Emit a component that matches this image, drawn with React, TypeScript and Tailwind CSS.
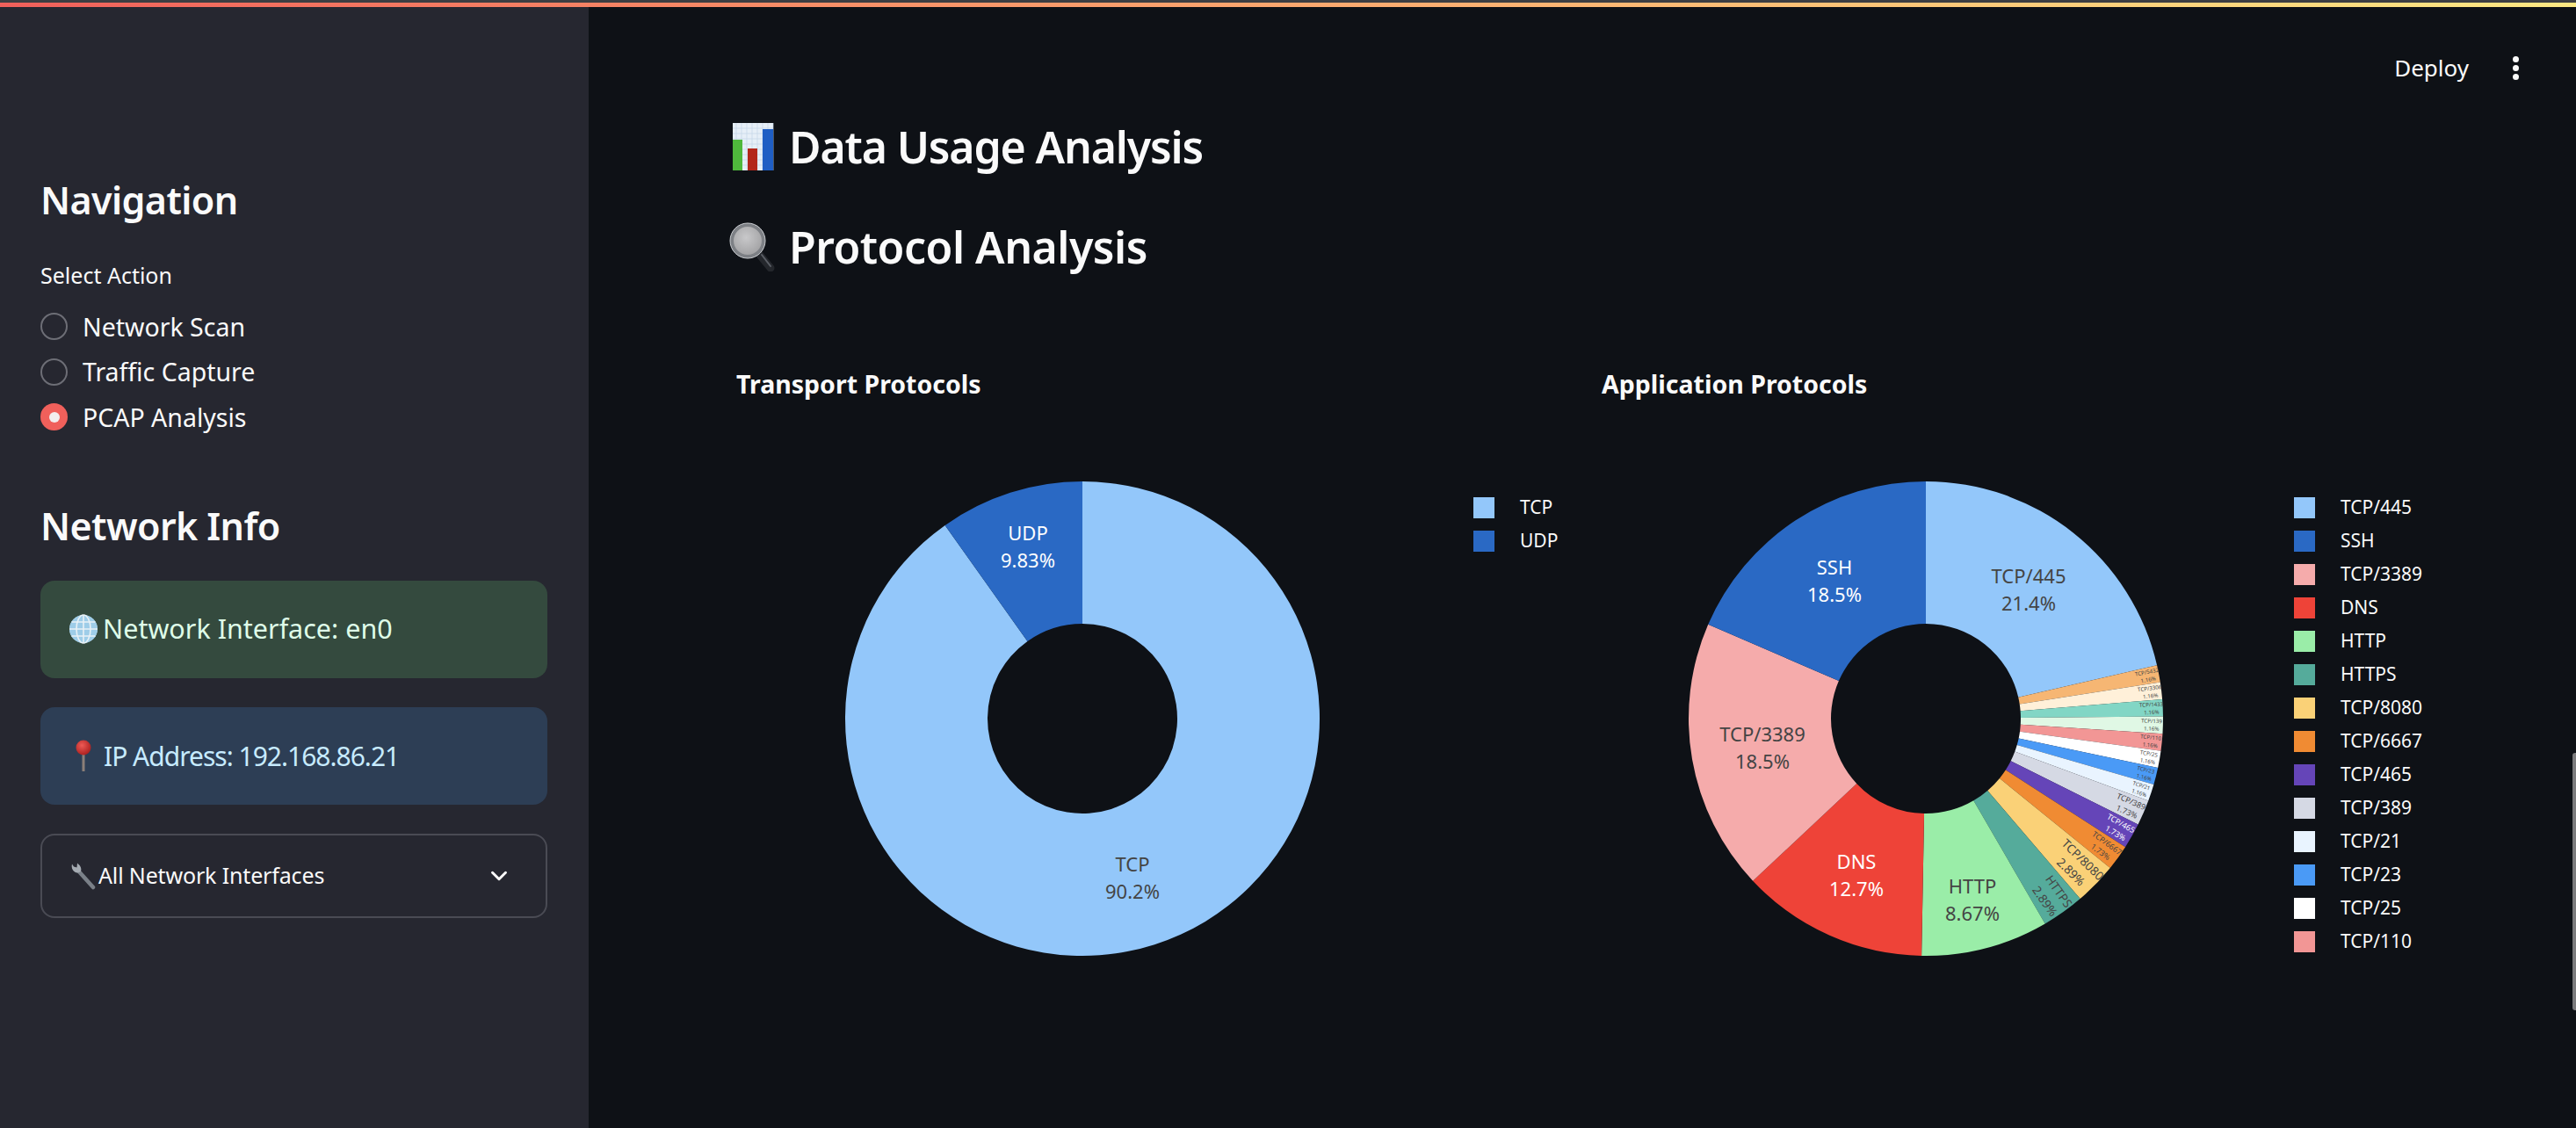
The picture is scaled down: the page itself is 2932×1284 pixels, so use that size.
import { ChevronDown } from "lucide-react";

type Slice = { name: string; count: number; color: string; pct: string; white?: boolean; font?: number; r?: number; at?: [number, number] };

const R = 270;
const HOLE = 108;

const TRANSPORT: Slice[] = [
    { name: "TCP", count: 90.17, color: "#93c7fa", pct: "90.2%", font: 22, at: [57, 181] },
    { name: "UDP", count: 9.83, color: "#2a69c4", pct: "9.83%", white: true, font: 22, at: [-62, -196] },
];

// clockwise from 12 o'clock
const APPLICATION: Slice[] = [
    { name: "TCP/445", count: 37, color: "#93c7fa", pct: "21.4%", font: 22, at: [117, -147] },
    { name: "TCP/5432", count: 2, color: "#f6b673", pct: "1.16%", font: 6.2, r: 257 },
    { name: "TCP/3306", count: 2, color: "#fff0d9", pct: "1.16%", font: 6.2, r: 257 },
    { name: "TCP/1433", count: 2, color: "#82d6c5", pct: "1.16%", font: 6.2, r: 257 },
    { name: "TCP/139", count: 2, color: "#e0f8e5", pct: "1.16%", font: 6.2, r: 257 },
    { name: "TCP/110", count: 2, color: "#f29695", pct: "1.16%", font: 6.2, r: 257 },
    { name: "TCP/25", count: 2, color: "#ffffff", pct: "1.16%", font: 6.2, r: 257 },
    { name: "TCP/23", count: 2, color: "#4a9af6", pct: "1.16%", font: 6.2, r: 257 },
    { name: "TCP/21", count: 2, color: "#e9f4ff", pct: "1.16%", font: 6.2, r: 257 },
    { name: "TCP/389", count: 3, color: "#d5d9e4", pct: "1.73%", font: 9, r: 252 },
    { name: "TCP/465", count: 3, color: "#6545b8", pct: "1.73%", white: true, font: 9, r: 252 },
    { name: "TCP/6667", count: 3, color: "#f08b33", pct: "1.73%", font: 8.8, r: 250 },
    { name: "TCP/8080", count: 5, color: "#fad177", pct: "2.89%", font: 13.6, r: 240 },
    { name: "HTTPS", count: 5, color: "#55ab9b", pct: "2.89%", font: 13.6, r: 248 },
    { name: "HTTP", count: 15, color: "#9aeda8", pct: "8.67%", font: 22, at: [53, 206] },
    { name: "DNS", count: 22, color: "#ee4338", pct: "12.7%", white: true, font: 22, at: [-79, 178] },
    { name: "TCP/3389", count: 32, color: "#f5abab", pct: "18.5%", font: 22, at: [-186, 33] },
    { name: "SSH", count: 32, color: "#2a69c4", pct: "18.5%", white: true, font: 22, at: [-104, -157] },
];

const LEGEND_ORDER = ["TCP/445", "SSH", "TCP/3389", "DNS", "HTTP", "HTTPS", "TCP/8080", "TCP/6667", "TCP/465", "TCP/389", "TCP/21", "TCP/23", "TCP/25", "TCP/110"];

function polar(r: number, deg: number): [number, number] {
    const a = (deg * Math.PI) / 180;
    return [r * Math.sin(a), -r * Math.cos(a)];
}

function Donut({ slices }: { slices: Slice[] }) {
    const total = slices.reduce((s, x) => s + x.count, 0);
    let acc = 0;
    return (
        <svg width={R * 2} height={R * 2} viewBox={`${-R} ${-R} ${R * 2} ${R * 2}`} className="shrink-0 overflow-visible">
            {slices.map((s) => {
                const from = (acc / total) * 360;
                acc += s.count;
                const to = (acc / total) * 360;
                const mid = (from + to) / 2;
                const large = to - from > 180 ? 1 : 0;
                const [x1, y1] = polar(R, from);
                const [x2, y2] = polar(R, to);
                const [x3, y3] = polar(HOLE, to);
                const [x4, y4] = polar(HOLE, from);
                const d = `M${x1} ${y1}A${R} ${R} 0 ${large} 1 ${x2} ${y2}L${x3} ${y3}A${HOLE} ${HOLE} 0 ${large} 0 ${x4} ${y4}Z`;
                const [lx, ly] = s.at ?? polar(s.r ?? 200, mid);
                const rot = s.at ? 0 : mid - 90;
                const f = s.font ?? 22;
                const fill = s.white ? "#ffffff" : "#444444";
                return (
                    <g key={s.name}>
                        <path d={d} fill={s.color} />
                        <g transform={`translate(${lx} ${ly}) rotate(${rot})`} fill={fill} fontSize={f} textAnchor="middle">
                            <text y={-f * 0.34}>{s.name}</text>
                            <text y={f * 1.08}>{s.pct}</text>
                        </g>
                    </g>
                );
            })}
        </svg>
    );
}

function Legend({ items }: { items: { name: string; color: string }[] }) {
    return (
        <div className="flex flex-col pt-[11px]">
            {items.map((it) => (
                <div key={it.name} className="flex items-center h-[38px]">
                    <span className="w-[24px] h-[24px] shrink-0" style={{ background: it.color }} />
                    <span className="ml-[29px] text-[21px] text-[#fafafa] whitespace-nowrap">{it.name}</span>
                </div>
            ))}
        </div>
    );
}

function BarChartEmoji() {
    return (
        <svg width="54" height="54" viewBox="0 0 54 54" className="shrink-0">
            <rect x="4" y="0" width="46" height="54" fill="#e6eff7" />
            {[6, 12, 18, 24, 30, 36, 42, 48].map((v) => (
                <path key={v} d={`M${v + 2} 0V54M4 ${v}H50`} stroke="#c3d5e6" strokeWidth="0.7" />
            ))}
            <rect x="4" y="19" width="11" height="35" fill="#4fb83c" />
            <rect x="21" y="29" width="11" height="25" fill="#b3261a" />
            <rect x="38" y="7" width="12" height="47" fill="#1f5ec4" />
        </svg>
    );
}

function MagnifierEmoji() {
    return (
        <svg width="54" height="56" viewBox="0 0 54 56" className="shrink-0">
            <defs>
                <radialGradient id="lens" cx="0.45" cy="0.4" r="0.7">
                    <stop offset="0" stopColor="#c8c8ca" />
                    <stop offset="1" stopColor="#9a9a9c" />
                </radialGradient>
            </defs>
            <path d="M33 35L47 52" stroke="#24272c" strokeWidth="9" strokeLinecap="round" />
            <path d="M37 37L47 50" stroke="#5b5f66" strokeWidth="2" strokeLinecap="round" />
            <circle cx="21" cy="21" r="18" fill="url(#lens)" stroke="#7d8085" strokeWidth="4" />
            <circle cx="21" cy="21" r="20" fill="none" stroke="#c9ccd0" strokeWidth="1" />
        </svg>
    );
}

function GlobeEmoji() {
    return (
        <svg width="34" height="34" viewBox="0 0 34 34" className="shrink-0">
            <circle cx="17" cy="17" r="16" fill="#d9e6ee" />
            <path d="M17 1a16 16 0 0 0 0 32a16 16 0 0 0 0-32Z" fill="#8ac4e6" opacity="0.75" />
            <g fill="none" stroke="#e8f1f6" strokeWidth="1.6">
                <ellipse cx="17" cy="17" rx="8" ry="16" />
                <path d="M17 1V33M1 17H33M3.5 9H30.5M3.5 25H30.5" />
            </g>
        </svg>
    );
}

function PinEmoji() {
    return (
        <svg width="34" height="36" viewBox="0 0 34 36" className="shrink-0">
            <defs>
                <radialGradient id="pinhead" cx="0.4" cy="0.35" r="0.7">
                    <stop offset="0" stopColor="#ee5a55" />
                    <stop offset="1" stopColor="#a81d1c" />
                </radialGradient>
            </defs>
            <rect x="15.5" y="14" width="3" height="22" fill="#8b7f78" />
            <circle cx="17" cy="9" r="8.5" fill="url(#pinhead)" />
        </svg>
    );
}

function WrenchEmoji() {
    return (
        <svg width="30" height="32" viewBox="0 0 30 32" className="shrink-0">
            <path d="M8 9L26 29" stroke="#7a8088" strokeWidth="4.5" strokeLinecap="round" />
            <path d="M2 2.5C1 6 2 9.5 5 11.5C7.5 13 10 12.5 12 11C13 8 12 4.5 9 2.5L8 1.5L7.5 6.5L4 5.5Z" fill="#a5abb2" />
        </svg>
    );
}

function Radio({ label, active }: { label: string; active?: boolean }) {
    return (
        <div className="flex items-center h-[51.5px]">
            {active ? (
                <span className="w-[31px] h-[31px] rounded-full bg-[#f0605b] flex items-center justify-center shrink-0">
                    <span className="w-[12px] h-[12px] rounded-full bg-[#f3eeee]" />
                </span>
            ) : (
                <span className="w-[31px] h-[31px] rounded-full border-2 border-[#6d6e76] shrink-0" />
            )}
            <span className="ml-[17px] text-[28.5px] leading-[40px] text-[#fafafa]">{label}</span>
        </div>
    );
}

function Sidebar() {
    return (
        <aside className="w-[670px] shrink-0 bg-[#262730] pl-[46px] pr-[47px] pt-[190px]">
            <h2 className="h-[60px] text-[43px] leading-[60px] font-semibold tracking-[-0.6px] text-[#fafafa]">Navigation</h2>
            <div className="mt-[35px] h-[40px] text-[25px] leading-[40px] text-[#fafafa]">Select Action</div>
            <div className="mt-[13px] flex flex-col">
                <Radio label="Network Scan" />
                <Radio label="Traffic Capture" />
                <Radio label="PCAP Analysis" active />
            </div>
            <h2 className="mt-[68px] h-[60px] text-[43px] leading-[60px] font-semibold tracking-[-0.6px] text-[#fafafa]">Network Info</h2>
            <div className="mt-[32px] h-[111px] rounded-[16px] bg-[#344a3e] flex items-center pl-[32px] text-[30.5px] text-[#dffde9]">
                <GlobeEmoji />
                <span className="ml-[5px]">Network Interface: en0</span>
            </div>
            <div className="mt-[33px] h-[111px] rounded-[16px] bg-[#2d3e55] flex items-center pl-[32px] text-[30px] tracking-[-1px] text-[#c7ebff]">
                <PinEmoji />
                <span className="ml-[6px]">IP Address: 192.168.86.21</span>
            </div>
            <div className="mt-[33px] h-[96px] rounded-[16px] border-2 border-[#4a4b54] flex items-center justify-between pl-[32px] pr-[38px] text-[25px] tracking-[-0.15px] text-[#fafafa]">
                <div className="flex items-center">
                    <WrenchEmoji />
                    <span className="ml-[2px]">All Network Interfaces</span>
                </div>
                <ChevronDown size={30} strokeWidth={2.4} />
            </div>
        </aside>
    );
}

function Header() {
    return (
        <header className="mt-[39px] h-[60px] flex items-center justify-end pr-[65px] text-[#fafafa]">
            <span className="text-[26px]">Deploy</span>
            <span className="ml-[50px] flex flex-col gap-[3px]">
                <span className="w-[7px] h-[7px] rounded-full bg-[#fafafa]" />
                <span className="w-[7px] h-[7px] rounded-full bg-[#fafafa]" />
                <span className="w-[7px] h-[7px] rounded-full bg-[#fafafa]" />
            </span>
        </header>
    );
}

export default function App() {
    const legendApp = LEGEND_ORDER.map((n) => APPLICATION.find((s) => s.name === n)!);
    return (
        <div className="w-[2932px] h-[1284px] overflow-hidden flex flex-col bg-[#0e1116] font-['Noto_Sans',sans-serif] relative">
            <div className="h-[3px] bg-[#3d3e42]" />
            <div className="h-[5px] bg-gradient-to-r from-[#f0605b] to-[#fce883]" />
            <div className="flex flex-1 min-h-0">
                <Sidebar />
                <main className="flex-1 min-w-0">
                    <Header />
                    <div className="pl-[160px] mt-[25px]">
                        <h1 className="h-[70px] flex items-center text-[50px] font-semibold tracking-[-1.15px] text-[#fafafa]">
                            <BarChartEmoji />
                            <span className="ml-[14px]">Data Usage Analysis</span>
                        </h1>
                        <h1 className="mt-[44px] h-[70px] flex items-center text-[50px] font-semibold tracking-[-0.5px] text-[#fafafa]">
                            <MagnifierEmoji />
                            <span className="ml-[14px]">Protocol Analysis</span>
                        </h1>
                        <div className="mt-[101px] flex">
                            <section className="w-[993px] shrink-0 pl-[8px]">
                                <h3 className="h-[40px] text-[28.5px] leading-[40px] font-bold text-[#fafafa]">Transport Protocols</h3>
                                <div className="mt-[91px] flex items-start pl-[124px]">
                                    <Donut slices={TRANSPORT} />
                                    <div className="ml-[175px]">
                                        <Legend items={TRANSPORT} />
                                    </div>
                                </div>
                            </section>
                            <section className="shrink-0">
                                <h3 className="h-[40px] text-[28.5px] leading-[40px] font-bold text-[#fafafa]">Application Protocols</h3>
                                <div className="mt-[91px] flex items-start pl-[99px]">
                                    <Donut slices={APPLICATION} />
                                    <div className="ml-[149px]">
                                        <Legend items={legendApp} />
                                    </div>
                                </div>
                            </section>
                        </div>
                    </div>
                </main>
            </div>
            <div className="absolute right-0 top-[857px] w-[4px] h-[293px] rounded-l-[3px] bg-[#7b7b7d]" />
        </div>
    );
}
